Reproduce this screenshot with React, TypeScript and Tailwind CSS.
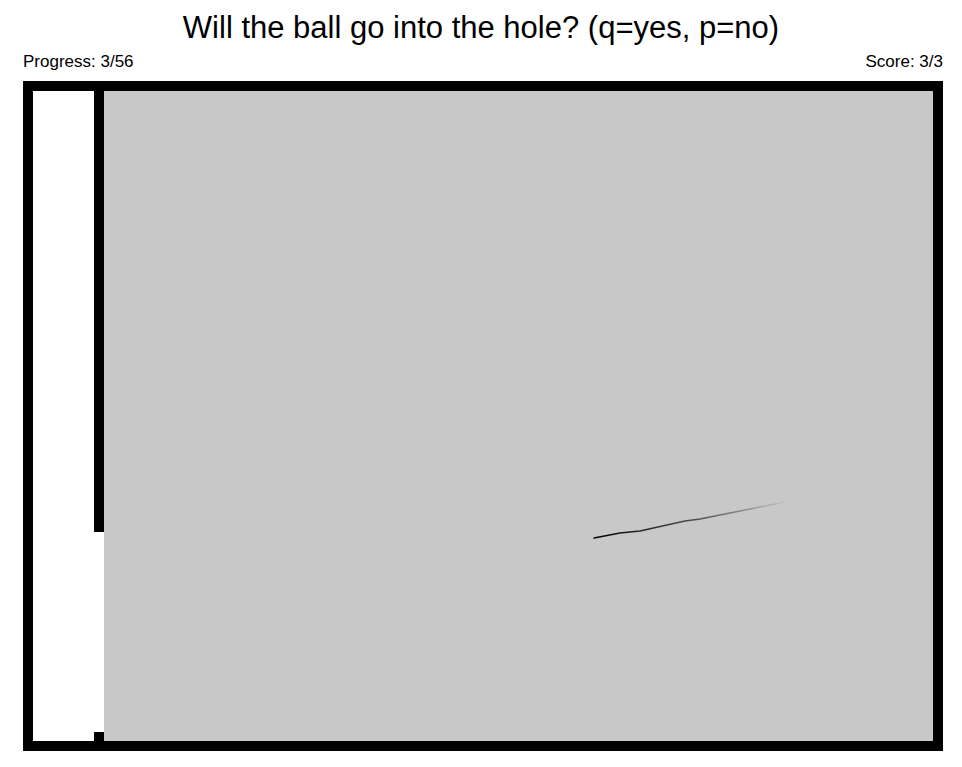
const trail = [
  [0, 37],
  [26, 32],
  [46, 30],
  [91, 20],
  [106, 18],
  [156, 8],
  [196, 0],
];

function Trail() {
  const d = trail.map(([x, y], i) => `${i === 0 ? "M" : "L"}${x + 2} ${y + 2}`).join(" ");
  return (
    <svg className="absolute left-[488px] top-[408px]" width="202" height="42" viewBox="0 0 202 42">
      <defs>
        <linearGradient id="fade" x1="0" y1="0" x2="1" y2="0">
          <stop offset="0" stopColor="#000" />
          <stop offset="0.55" stopColor="#555" />
          <stop offset="1" stopColor="#c8c8c8" />
        </linearGradient>
      </defs>
      <path d={d} fill="none" stroke="url(#fade)" strokeWidth="1.4" strokeLinecap="round" strokeLinejoin="round" />
    </svg>
  );
}

export default function App() {
  return (
    <div className="w-[962px] h-[767px] bg-white font-['Liberation_Sans',Arial,sans-serif] text-black">
      <h1 className="pt-[10px] text-center text-[31px] leading-[36px] font-normal">
        Will the ball go into the hole? (q=yes, p=no)
      </h1>
      <div className="ml-[23px] mt-[6px] flex h-[29px] w-[920px] justify-between text-[17px] leading-[20px]">
        <span>Progress: 3/56</span>
        <span>Score: 3/3</span>
      </div>
      <div className="ml-[23px] flex h-[670px] w-[920px] border-[10px] border-black">
        <div className="w-[61px] bg-white" />
        <div className="flex w-[10px] flex-col bg-white">
          <div className="h-[441px] bg-black" />
          <div className="flex-1" />
          <div className="h-[9px] bg-black" />
        </div>
        <div className="relative flex-1 bg-[#c8c8c8]">
          <Trail />
        </div>
      </div>
    </div>
  );
}
